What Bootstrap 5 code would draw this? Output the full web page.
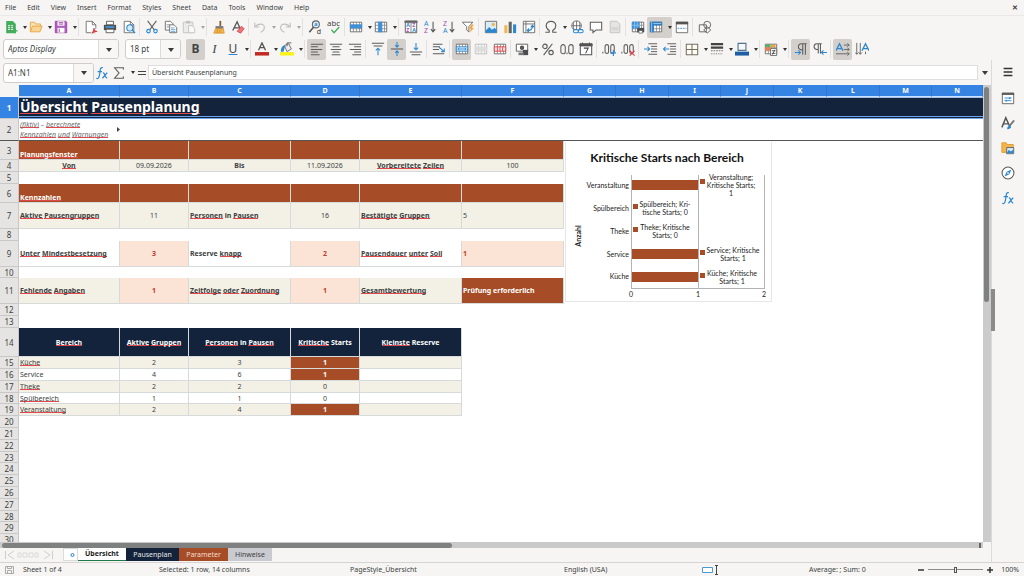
<!DOCTYPE html>
<html lang="en">
<head>
<meta charset="utf-8">
<meta name="viewport" content="width=device-width, initial-scale=1">
<title>Übersicht Pausenplanung</title>
<link href="https://cdn.jsdelivr.net/npm/bootstrap@5.3.0/dist/css/bootstrap.min.css" rel="stylesheet">
<script src="https://cdn.jsdelivr.net/npm/bootstrap@5.3.0/dist/js/bootstrap.bundle.min.js"></script>
<style>
  :root { --ui:#f6f5f4; --edge:#dcdad8; --navy:#14233c; --rust:#a64c26; --cream:#f3f0e6; --peach:#fbe3d6; --blue:#3584e4; --ink:#3c3f41; }
  body { font-family:"Noto Sans","Open Sans",sans-serif; font-size:7px; line-height:10px; color:var(--ink); background:var(--ui); }
  button, input { font:inherit; color:inherit; }
  button { border:0; background:none; padding:0; }

  .menus { height:15px; padding:0 6px 0 0; gap:1px; }
  .menus button { padding:0 5px; }
  .bar-a { height:23px; padding-left:2px; border-top:1px solid #ebe9e7; }
  .bar-b { height:22px; padding-left:3px; }
  .tool { width:19px; height:21px; display:flex; align-items:center; justify-content:center; border-radius:2px; flex:none; }
  .tool svg, .side svg { width:14px; height:14px; display:block; }
  .tool.drop { width:25px; justify-content:flex-start; padding-left:2px; }
  .tool.drop::after { content:""; margin-left:5px; border:2px solid transparent; border-top:3px solid #333; border-bottom:0; }
  .tool.slim { width:16px; }
  .tool.on { background:#d3d0cc; }
  .tool.dim { opacity:.4; }
  .split { width:4px; height:18px; flex:none; background:linear-gradient(90deg,transparent 1px,#e3e1df 1px,#e3e1df 2px,transparent 2px); }
  .bigletter { font-size:12px; line-height:14px; color:#444; width:14px; text-align:center; }
  .serif { font-family:"Liberation Serif",serif; font-size:13px; }
  .uline { text-decoration:underline #2c87cf 1px; text-underline-offset:1px; }

  .combo { height:20px; border:1px solid #cfccc9; border-radius:3px; background:#fff; overflow:hidden; flex:none; }
  .combo input { border:0; padding:0 4px; min-width:0; background:none; outline:0; }
  .combo button { width:20px; background:#f8f7f6; border-left:1px solid var(--edge); flex:none; }
  .caret { display:inline-block; border:3px solid transparent; border-top:4px solid #3a3a3a; border-bottom:0; vertical-align:middle; }
  .font-name { width:116px; margin-right:6px; font-size:8px; font-style:italic; }
  .font-size { width:56px; margin-right:5px; font-size:8px; }
  .name-box { width:91px; font-size:8px; }
  .formula { height:25px; padding-left:3px; }
  .formula .glyph { width:13px; text-align:center; flex:none; }
  .formula .entry { height:15px; border:1px solid #e0dedc; background:#fff; padding:0 3px; min-width:0; outline:0; }

  .side { width:33px; border-left:1px solid var(--edge); padding-top:1px; }
  .side button { height:25px; }
  .side button:first-child { height:22px; margin-bottom:2px; }
  .side .grip { left:-1px; top:229px; width:4px; height:42px; background:#8b8b8b; }

  .sheet { background:#fff; }
  .grid { width:100%; table-layout:fixed; border-collapse:separate; border-spacing:0; }
  .grid th, .grid td { height:12px; padding:0 1px; line-height:9px; overflow:hidden; white-space:nowrap; vertical-align:middle; }
  .grid thead th { background:var(--blue); color:#fff; text-align:center; border-right:1px solid #2f76cc; border-bottom:1px solid #cfe0f7; }
  .grid thead th:first-child { background:var(--ui); border-color:transparent; }
  .grid tbody th { background:#e5e4e3; border-right:1px solid #c9c8c7; border-bottom:1px solid #c9c8c7; font-weight:400; font-size:8px; text-align:center; }
  .grid tbody th.cur { background:var(--blue); color:#fff; font-weight:700; }
  .grid .h11 > * { height:11px; } .grid .h19 > * { height:19px; } .grid .h22 > * { height:22px; }
  .grid .h26 > * { height:26px; } .grid .h29 > * { height:29px; }
  .grid u { text-decoration:none; background:linear-gradient(#e0484c,#e0484c) 0 90%/100% 1px no-repeat; }
  .grid td.heading { background:var(--navy); color:#fff; font-size:14px; line-height:18px; font-weight:700; border-top:1px solid #9dc2f0; border-bottom:3px double #6ea5e8; }
  .grid td.note { font-style:italic; color:#6b6b6b; white-space:normal; padding-right:2px; line-height:10px; }
  .freeze > * { border-bottom:1px solid #555 !important; }
  .cl, .band > td, .navy > td { border-right:1px solid #d6dadb; border-bottom:1px solid #d6dadb; }
  .band > td { background:var(--rust); color:#fff; font-weight:700; }
  .grid .band > td { vertical-align:bottom; }
  .navy > td { background:var(--navy); color:#fff; font-weight:700; text-align:center; }
  .cream { background:var(--cream); }
  .peach { background:var(--peach); color:#b8402a; font-weight:700; }
  .rust { background:var(--rust); color:#fff; font-weight:700; }
  .grid tbody td.plain { background:#fff; border:0; }
  .clipmark { left:117px; top:42px; }
  .chart { left:565px; top:57px; width:207px; height:160px; background:#fff; border:1px solid #e6e6e6; border-top:0; font-family:Lato,sans-serif; }

  .vtrack { width:8px; background:#cbcbcb; padding:2px 1px; }
  .vtrack div { width:5px; height:47.5%; border-radius:3px; background:#7f8180; }
  .htrack { height:6px; background:#c9c9c9; margin-right:8px; padding:1px 2px; }
  .htrack div { height:5px; width:46%; border-radius:3px; background:#7f8180; }
  .htrack i { width:2px; height:5px; background:#666; }

  .tabs { height:14px; }
  .tabs .tab { height:13px; text-align:center; }
  .navs { width:63px; padding-left:4px; }
  .navs button { line-height:0; }
  .tabs .adder { width:15px; background:#fff; border:1px solid var(--edge); text-align:right; line-height:0; padding-right:2px; }
  .t-on { width:48px; background:#fff; border-bottom:1px solid #1f7a4a; color:#222; }
  .t-navy { width:53px; background:var(--navy); color:#e6e6e6; }
  .t-rust { width:49px; background:var(--rust); color:#f6dccf; }
  .t-grey { width:44px; background:#c9cbd0; }

  .status { height:14px; border-top:1px solid #d6d4d2; }
  .s-a { width:136px; } .s-b { width:191px; } .s-c { width:214px; } .s-d { width:138px; } .s-e { width:107px; }
  .zoomset { gap:4px; padding-right:5px; }
  .zoomset button { line-height:0; }
  .zoomset > span { margin-left:4px; }
  .zoomer { width:55px; height:10px; appearance:none; background:linear-gradient(#8c8c8c,#8c8c8c) center/100% 1px no-repeat; }
  .zoomer::-webkit-slider-thumb { appearance:none; width:3px; height:6px; background:#eee; border:1px solid #555; }
</style>
</head>
<body class="vh-100 overflow-hidden d-flex flex-column">

<svg class="d-none" xmlns="http://www.w3.org/2000/svg">
  <defs>
    <g id="page" fill="#fff" stroke="#6b6b6b"><path d="M2.5 1.5h7l4 4v9h-11z"/><path d="M9.5 1.5v4h4" fill="none"/></g>
    <g id="tablegrid"><path d="M1.5 2.500h13v11h-13z" fill="#fff" stroke="#666"/><path d="M1.500 6h13M1.500 10h13M5 2.500v11M8.500 2.500v11M12 2.500v11" fill="none" stroke="#777" stroke-width=".8"/></g>
  </defs>
  <symbol id="new" viewBox="0 0 16 16"><path d="M2.500 1h7.500l3.500 3.500v10.500h-11z" fill="#43b05c"/><path d="M4 5h7v7H4zM4 7.300h7M4 9.600h7M7.500 5v7" fill="#d9f2df" stroke="#2c9648" stroke-width=".8"/><path d="M13 10v5M10.500 12.500h5" stroke="#43b05c" stroke-width="1.500"/></symbol>
  <symbol id="open" viewBox="0 0 16 16"><path d="M1.500 13.500v-11h5l1 2h5.500v3" fill="#fbe3b8" stroke="#e8a33d"/><path d="M1.500 13.500l2.500-6.500h11l-2.500 6.500z" fill="#f8d594" stroke="#e8a33d"/></symbol>
  <symbol id="save" viewBox="0 0 16 16"><path d="M1.500 1.500h12l1 1v12h-13z" fill="#b05cc0" stroke="#96429f"/><path d="M4 1.500h8v5H4z" fill="#fff"/><path d="M4 9h8v5.500H4z" fill="#fff"/><path d="M5.500 3h5M5.500 4.700h5M6 10v4" stroke="#96429f"/></symbol>
  <symbol id="pdf" viewBox="0 0 16 16"><use href="#page"/><path d="M8 10h7v5H8z" fill="#fff"/><path d="M9 15c2-2 2.500-4 2.500-6 0 3 1.500 4 3.500 4-3 0-5 1-6 2z" fill="none" stroke="#d9363e" stroke-width="1.200"/></symbol>
  <symbol id="print" viewBox="0 0 16 16"><path d="M4 1.500h8v4H4z" fill="#fff" stroke="#555"/><path d="M1 5.500h14v6H1z" fill="#4d5053"/><path d="M3 7h10v2H3z" fill="#4a96d8"/><path d="M3.500 10.500h9v4h-9z" fill="#fff" stroke="#555"/></symbol>
  <symbol id="preview" viewBox="0 0 16 16"><use href="#page"/><circle cx="9" cy="9" r="3.500" fill="#d7ebfb" stroke="#2c87cf" stroke-width="1.200"/><path d="M11.500 11.500l3.500 3.500" stroke="#2c87cf" stroke-width="1.500"/></symbol>
  <symbol id="cut" viewBox="0 0 16 16"><path d="M3 1l7.500 10M13 1L5.500 11" stroke="#666" stroke-width="1.300"/><circle cx="4" cy="12.700" r="2" fill="none" stroke="#2c87cf" stroke-width="1.300"/><circle cx="12" cy="12.700" r="2" fill="none" stroke="#2c87cf" stroke-width="1.300"/></symbol>
  <symbol id="copy" viewBox="0 0 16 16"><path d="M1.500 1.500h6l3 3v7h-9z" fill="#fff" stroke="#666"/><path d="M3 5.500h4M3 8h3" stroke="#888"/><path d="M6.500 5.500h5l3 3v6h-8z" fill="#fff" stroke="#666"/><path d="M8 9h4M8 11h5M8 13h5" stroke="#2c87cf" stroke-width=".8"/></symbol>
  <symbol id="paste" viewBox="0 0 16 16"><path d="M1.500 2.500h11v12h-11z" fill="#ddd" stroke="#777"/><path d="M4.500 1h5v3h-5z" fill="#777"/><path d="M7.500 6.500h4l3 3v5h-7z" fill="#fff" stroke="#777"/></symbol>
  <symbol id="clone" viewBox="0 0 16 16"><path d="M9.500 1v6" stroke="#8a5b2b" stroke-width="2"/><path d="M4 7h9v3H4z" fill="#777"/><path d="M4 10h9l1 5H2z" fill="#f2b54f" stroke="#d28d22" stroke-width=".8"/><path d="M6 11v4M9 11v4" stroke="#d28d22"/></symbol>
  <symbol id="clear" viewBox="0 0 16 16"><path d="M2 12L7 2l3.500 8M4 9h5" fill="none" stroke="#555" stroke-width="1.500"/><path d="M7 13l5-6 3 3-4 5z" fill="#ee7376" stroke="#cf3a40" stroke-width=".8"/></symbol>
  <symbol id="undo" viewBox="0 0 16 16"><path d="M2 3v5h5M2.500 8C5 4 13 3 13 8.500c0 3-2 4.500-4.500 5.500" fill="none" stroke="#777" stroke-width="1.300"/></symbol>
  <symbol id="redo" viewBox="0 0 16 16"><path d="M14 3v5H9M13.500 8C11 4 3 3 3 8.500c0 3 2 4.500 4.500 5.500" fill="none" stroke="#777" stroke-width="1.300"/></symbol>
  <symbol id="find" viewBox="0 0 16 16"><circle cx="9" cy="5" r="4" fill="#d8ecfb" stroke="#666" stroke-width="1.200"/><path d="M6.500 8L1.500 14" stroke="#555" stroke-width="1.800"/><text x="7" y="7" font-size="6" fill="#2c87cf" font-weight="700">a</text><text x="10" y="16" font-size="8" fill="#333">d</text></symbol>
  <symbol id="spell" viewBox="0 0 16 16"><text x="0" y="7" font-size="9" fill="#444">abc</text><path d="M5 11l3 3.500 6-6.500" fill="none" stroke="#43a85b" stroke-width="1.500"/></symbol>
  <symbol id="rows" viewBox="0 0 16 16"><use href="#tablegrid"/><path d="M1 5h14v4.500H1z" fill="#3c91d8"/></symbol>
  <symbol id="cols" viewBox="0 0 16 16"><use href="#tablegrid"/><path d="M5 2h4.500v12H5z" fill="#3c91d8"/></symbol>
  <symbol id="sort" viewBox="0 0 16 16"><path d="M1.500 1.500h13v13h-13z" fill="#fff" stroke="#555"/><path d="M1 1h14v2H1zM8 3v12" fill="#555" stroke="#777"/><g font-size="6" font-weight="700"><text x="2.500" y="8.500" fill="#2c87cf">A</text><text x="2.500" y="14" fill="#a04fb5">Z</text><text x="9.500" y="8.500" fill="#a04fb5">Z</text><text x="9.500" y="14" fill="#2c87cf">A</text></g></symbol>
  <symbol id="az" viewBox="0 0 16 16"><g font-size="8"><text x="1" y="7" fill="#2c87cf">A</text><text x="1" y="15" fill="#a04fb5">Z</text></g><path d="M11.500 2v11M9 10.500l2.500 3 2.500-3" fill="none" stroke="#555" stroke-width="1.200"/></symbol>
  <symbol id="za" viewBox="0 0 16 16"><g font-size="8"><text x="1" y="7" fill="#a04fb5">Z</text><text x="1" y="15" fill="#2c87cf">A</text></g><path d="M11.500 2v11M9 10.500l2.500 3 2.500-3" fill="none" stroke="#555" stroke-width="1.200"/></symbol>
  <symbol id="filter" viewBox="0 0 16 16"><path d="M1.500 2.500h12l-4.500 5v6l-2.500-2v-4z" fill="#fff" stroke="#666"/><path d="M12 5l-3 5h2.500L9 15l6-6h-2.500l2-4z" fill="#f2a73c"/></symbol>
  <symbol id="image" viewBox="0 0 16 16"><path d="M1.500 1.500h13v13h-13z" fill="#d8ecfb" stroke="#666"/><circle cx="10.500" cy="5" r="1.800" fill="#f5b63f"/><path d="M2 12l4-4 3 3 3-2 2.500 2v3.500H2z" fill="#2c87cf"/></symbol>
  <symbol id="bars" viewBox="0 0 16 16"><path d="M1.500 6h3.500v9H1.500z" fill="#f2b54f"/><path d="M6.500 2H10v13H6.500z" fill="#636363"/><path d="M11.500 5H15v10h-3.500z" fill="#2c87cf"/></symbol>
  <symbol id="pivot" viewBox="0 0 16 16"><path d="M1.500 1.500h13v13h-13zM1.500 4.500h13M4.500 1.500v13" fill="#fff" stroke="#666"/><path d="M6 12c5 0 6-2 6-5M10 8.500l2-2.500 2 2.500M8 9.500L6 12l2 2" fill="none" stroke="#2c87cf" stroke-width="1.300"/></symbol>
  <symbol id="omega" viewBox="0 0 16 16"><path d="M1.500 14H6v-2C3 10 2.500 8 2.500 6.500 2.500 3.500 5 1.500 8 1.500s5.500 2 5.500 5c0 1.500-.500 3.500-3.500 5.500v2h4.500" fill="none" stroke="#5c5c5c" stroke-width="1.300"/></symbol>
  <symbol id="link" viewBox="0 0 16 16"><circle cx="7.500" cy="6.500" r="5.500" fill="#fff" stroke="#666"/><path d="M2 6.500h11M7.500 1v11M4.500 2c-1 3-1 6 0 9M10.500 2c1 3 1 6 0 9" fill="none" stroke="#666"/><rect x="4" y="11" width="5.500" height="3.500" rx="1.700" fill="#fff" stroke="#2c87cf" stroke-width="1.200"/><rect x="9.500" y="11" width="5.500" height="3.500" rx="1.700" fill="#fff" stroke="#2c87cf" stroke-width="1.200"/></symbol>
  <symbol id="comment" viewBox="0 0 16 16"><path d="M1.500 2.500h13v9H8l-3.500 3v-3h-3z" fill="#fff" stroke="#5c5c5c" stroke-width="1.200"/></symbol>
  <symbol id="header" viewBox="0 0 16 16"><path d="M2.500 1.500h8l3 3v10h-11z" fill="#ccc" stroke="#777"/><path d="M4 8h8v4H4z" fill="#aaa"/></symbol>
  <symbol id="range" viewBox="0 0 16 16"><use href="#tablegrid"/><path d="M1 2h9v8H1z" fill="#3c91d8"/><path d="M4 2v8M7 2v8M1 6h9" stroke="#9fcbef" stroke-width=".8"/><path d="M7 9h8v5H7z" fill="#4d5053"/><path d="M9 12h4v3H9z" fill="#fff" stroke="#555" stroke-width=".8"/></symbol>
  <symbol id="freeze" viewBox="0 0 16 16"><use href="#tablegrid"/><path d="M1 2h14v4H1zM1 6h4.500v8H1z" fill="#2c7fc6"/><path d="M3 2v12M5 4h9" stroke="#9fcbef"/></symbol>
  <symbol id="window" viewBox="0 0 16 16"><path d="M1.500 2.500h13v12h-13z" fill="#fff" stroke="#666"/><path d="M1 2h14v3H1z" fill="#555"/><path d="M3 9.500h10" stroke="#2c87cf" stroke-dasharray="2 1"/></symbol>
  <symbol id="shapes" viewBox="0 0 16 16"><g fill="none" stroke="#666" stroke-width="1.100"><path d="M1.500 5.500h8v8h-8z"/><circle cx="10.500" cy="5.500" r="4"/><path d="M10.500 7.500l4 4-4 3.500-4-3.500z"/></g></symbol>
  <symbol id="fcolor" viewBox="0 0 16 16"><path d="M4 9.500L8 1l4 8.500M5.500 6.500h5" fill="none" stroke="#555" stroke-width="1.500"/><path d="M0 11.500h16v4H0z" fill="#c3271f"/></symbol>
  <symbol id="bcolor" viewBox="0 0 16 16"><path d="M5 4l5-2 3 6-5 3z" fill="#eee" stroke="#666"/><path d="M8 5V1h5" fill="none" stroke="#555"/><path d="M1 11c0-5 2-7 5-7L4 11z" fill="#2c87cf"/><path d="M0 11.500h16v4H0z" fill="#fbf21c"/></symbol>
  <symbol id="left" viewBox="0 0 16 16"><path d="M1 2.500h14M1 5.500h8M1 8.500h13M1 11.500h8M1 14.500h10" stroke="#5c5c5c" stroke-width="1.200"/></symbol>
  <symbol id="center" viewBox="0 0 16 16"><path d="M1 2.500h14M4 5.500h8M2 8.500h12M4 11.500h8M3 14.500h10" stroke="#5c5c5c" stroke-width="1.200"/></symbol>
  <symbol id="right" viewBox="0 0 16 16"><path d="M1 2.500h14M7 5.500h8M2 8.500h13M7 11.500h8M5 14.500h10" stroke="#5c5c5c" stroke-width="1.200"/></symbol>
  <symbol id="vtop" viewBox="0 0 16 16"><path d="M1 1.500h14M3 4.500h10" stroke="#5c5c5c" stroke-width="1.200"/><path d="M8 15V7M5.500 9.500L8 7l2.500 2.500" fill="none" stroke="#2c87cf" stroke-width="1.200"/></symbol>
  <symbol id="vmid" viewBox="0 0 16 16"><path d="M1 8h14" stroke="#5c5c5c" stroke-width="1.200"/><path d="M8 0v6M6 3.500L8 6l2-2.500M8 16v-6M6 12.500l2-2.500 2 2.500" fill="none" stroke="#2c87cf" stroke-width="1.200"/></symbol>
  <symbol id="vbot" viewBox="0 0 16 16"><path d="M1 11.500h14M3 14.500h10" stroke="#5c5c5c" stroke-width="1.200"/><path d="M8 1v8M5.500 6.500L8 9l2.500-2.500" fill="none" stroke="#2c87cf" stroke-width="1.200"/></symbol>
  <symbol id="wrap" viewBox="0 0 16 16"><path d="M1 2.500h11M1 5.500h8M1 8.500h7M1 13.500h13" stroke="#5c5c5c" stroke-width="1.200"/><path d="M8 6l6 5M14 7.500V11h-3.500" fill="none" stroke="#2c87cf" stroke-width="1.200"/></symbol>
  <symbol id="merge" viewBox="0 0 16 16"><use href="#tablegrid"/><path d="M1.500 5.500h13v5h-13z" fill="#d8ecfb" stroke="#2c87cf"/><path d="M3 8h10M5 6.500L3.500 8 5 9.500M11 6.500L12.500 8 11 9.500" fill="none" stroke="#2c87cf"/></symbol>
  <symbol id="mergeb" viewBox="0 0 16 16"><use href="#tablegrid"/><path d="M1 5.500h14v5H1z" fill="#bbb"/></symbol>
  <symbol id="unmerge" viewBox="0 0 16 16"><use href="#tablegrid"/><path d="M1.500 5.500h13v5h-13zM8 5.500v5M5 5.500v5M11 5.500v5" fill="#fde6e6" stroke="#d9454a"/></symbol>
  <symbol id="money" viewBox="0 0 16 16"><path d="M1.500 2.500h13v8h-13z" fill="#fff" stroke="#555"/><circle cx="8" cy="6.500" r="2.500" fill="#555"/><path d="M9 9h6v6H9z" fill="#4d4d4d"/><path d="M4 12h6v3H4z" fill="#777"/></symbol>
  <symbol id="percent" viewBox="0 0 16 16"><g fill="none" stroke="#5c5c5c" stroke-width="1.300"><circle cx="4.500" cy="5" r="2.500"/><circle cx="11.500" cy="12" r="2.500"/><path d="M13 2L3 15"/></g></symbol>
  <symbol id="number" viewBox="0 0 16 16"><g fill="none" stroke="#5c5c5c" stroke-width="1.200"><rect x="1" y="3" width="5" height="10.500" rx="2.500"/><rect x="10" y="3" width="5" height="10.500" rx="2.500"/><path d="M8 12v2"/></g></symbol>
  <symbol id="date" viewBox="0 0 16 16"><path d="M1.500 2.500h13v12h-13z" fill="#fff" stroke="#555" stroke-width="1.200"/><path d="M1 2h14v2.500H1zM4 .5v2M12 .5v2" fill="#555" stroke="#555"/><path d="M5.500 7h5l-3 6" fill="none" stroke="#444" stroke-width="1.200"/></symbol>
  <symbol id="decadd" viewBox="0 0 16 16"><g fill="none" stroke="#5c5c5c" stroke-width="1.200"><path d="M1 11v2"/><rect x="3.500" y="3" width="4" height="10" rx="2"/><rect x="10" y="3" width="4" height="10" rx="2"/></g><path d="M13 9v7M9.500 12.500H16" stroke="#2c87cf" stroke-width="1.300"/></symbol>
  <symbol id="decdel" viewBox="0 0 16 16"><g fill="none" stroke="#5c5c5c" stroke-width="1.200"><path d="M1 11v2"/><rect x="3.500" y="3" width="4" height="10" rx="2"/><rect x="10" y="3" width="4" height="10" rx="2"/></g><path d="M10 10l5.500 5.500M15.500 10L10 15.500" stroke="#d9454a" stroke-width="1.300"/></symbol>
  <symbol id="indent" viewBox="0 0 16 16"><path d="M5 2h10M8 5h7M8 8h7M8 11h7M5 14h10" stroke="#5c5c5c" stroke-width="1.100"/><path d="M0 8h6M4 5.500L6.500 8 4 10.500" fill="none" stroke="#2c87cf" stroke-width="1.200"/></symbol>
  <symbol id="outdent" viewBox="0 0 16 16"><path d="M5 2h10M8 5h7M8 8h7M8 11h7M5 14h10" stroke="#5c5c5c" stroke-width="1.100"/><path d="M7 8H1M3 5.500L.5 8 3 10.500" fill="none" stroke="#2c87cf" stroke-width="1.200"/></symbol>
  <symbol id="borders" viewBox="0 0 16 16"><path d="M1.500 2.500h13v12h-13zM8 2.500v12M1.500 8.500h13" fill="#fffdf5" stroke="#76705f" stroke-width="1.200"/></symbol>
  <symbol id="bstyle" viewBox="0 0 16 16"><path d="M1 2.500h14M1 6.500h14" stroke="#444" stroke-width="2.500"/><path d="M1 10h14" stroke="#666" stroke-dasharray="2 1"/><path d="M1 13.500h14" stroke="#666" stroke-dasharray="1 1"/></symbol>
  <symbol id="bcol" viewBox="0 0 16 16"><path d="M3.500 1.500h9v8h-9z" fill="#f4f9fd" stroke="#56728c" stroke-width="1.300"/><path d="M0 11h16v4.500H0z" fill="#1d5fa6"/></symbol>
  <symbol id="cond" viewBox="0 0 16 16"><use href="#tablegrid"/><path d="M1.500 3h6v3h-6z" fill="#54b36a"/><path d="M1.500 6h6v4h-6z" fill="#ea7f52"/><path d="M8 3h5v3H8z" fill="#e8a33d"/><path d="M7.500 7.500h7v8h-7z" fill="#fff" stroke="#666"/><path d="M9 10h4M9 13h4M12.500 9l-3 5.500" stroke="#444"/></symbol>
  <symbol id="ltr" viewBox="0 0 16 16"><path d="M14.500 2H8.500a3.500 3.500 0 000 7H10V2M10 2v12.500M13 2v12.500" fill="none" stroke="#5c5c5c" stroke-width="1.200"/><path d="M1 12h6M5 9.500L7.500 12 5 14.500" fill="none" stroke="#2c87cf" stroke-width="1.200"/></symbol>
  <symbol id="rtl" viewBox="0 0 16 16"><path d="M10 2H4.500a3 3 0 000 6.500H6V2v11M8.500 2v11" fill="none" stroke="#5c5c5c" stroke-width="1.200"/><path d="M16 12h-6M12 9.500L9.500 12l2.500 2.500" fill="none" stroke="#2c87cf" stroke-width="1.200"/></symbol>
  <symbol id="hori" viewBox="0 0 16 16"><path d="M0 10L4 2l4 8M1.500 7.500h5" fill="none" stroke="#2c87cf" stroke-width="1.500"/><path d="M9 3.500h6M9 8.500h6M0 13.500h15M13 1.500l2 2-2 2M13 6.500l2 2-2 2M13 11.500l2 2-2 2" fill="none" stroke="#5c5c5c"/></symbol>
  <symbol id="vert" viewBox="0 0 16 16"><path d="M8 10l4-8 4 8M9.500 7.500h5" fill="none" stroke="#2c87cf" stroke-width="1.500"/><path d="M2 1v13M6 1v13M0 12l2 2 2-2M4.500 12L6 14l2-2M12 11v3" fill="none" stroke="#5c5c5c"/></symbol>
  <symbol id="deck" viewBox="0 0 16 16"><path d="M1.500 2.500h13v12h-13z" fill="#fff" stroke="#5c5c5c"/><path d="M1 2h14v2.500H1z" fill="#5c5c5c"/><path d="M4 8h8M4 11h8" stroke="#2c87cf"/><path d="M10 7v2M6 10v2" stroke="#2c87cf" stroke-width="1.500"/></symbol>
  <symbol id="styles" viewBox="0 0 16 16"><path d="M1 13L5.500 2 10 12M2.500 9h6" fill="none" stroke="#555" stroke-width="1.700"/><path d="M15 5l-5 6" stroke="#777" stroke-width="2"/><path d="M7 15c0-3 2-4.500 4-4 1.500 2-1 4-4 4z" fill="#2c87cf"/></symbol>
  <symbol id="gallery" viewBox="0 0 16 16"><path d="M1 2h5l1 2h7v9H1z" fill="#f2b54f" stroke="#dd9930"/><path d="M6.500 7.500h8v7h-8z" fill="#d8ecfb" stroke="#5c5c5c"/><path d="M7 13l2-3 2 2 3-2v4H7z" fill="#2c87cf"/></symbol>
  <symbol id="nav" viewBox="0 0 16 16"><circle cx="8" cy="8" r="6.800" fill="#fff" stroke="#5c5c5c" stroke-width="1.200"/><path d="M12 4L9.500 9.500 4 12l2.500-5.500z" fill="#2c87cf"/><circle cx="8" cy="8" r="1" fill="#fff"/></symbol>
  <symbol id="fx" viewBox="0 0 16 16"><g fill="none" stroke="#2c87cf" stroke-width="1.400"><path d="M9 2C6 1 6 4 5.500 8S4 15.500 1.500 14M3 6.500h5"/><path d="M9 8c2.500-1 2 6 5 5.500M14 7.500L8.500 14"/></g></symbol>
  <symbol id="sigma" viewBox="0 0 16 16"><path d="M13 4V2H3l5 6-5 6h10v-2" fill="none" stroke="#5c5c5c" stroke-width="1.300"/></symbol>
  <symbol id="burger" viewBox="0 0 16 16"><path d="M3 4h10M3 8h10M3 12h10" stroke="#333" stroke-width="1.600"/></symbol>
</svg>

<nav class="menus d-flex align-items-center flex-shrink-0" aria-label="Menu">
  <button>File</button><button>Edit</button><button>View</button><button>Insert</button><button>Format</button><button>Styles</button><button>Sheet</button><button>Data</button><button>Tools</button><button>Window</button><button>Help</button>
  <button class="ms-auto p-0 fw-bold" aria-label="Close document">✕</button>
</nav>

<div class="bar-a d-flex align-items-center flex-shrink-0" role="toolbar" aria-label="Standard">
  <button class="tool drop" aria-label="New"><svg><use href="#new"/></svg></button><button class="tool drop" aria-label="Open"><svg><use href="#open"/></svg></button><button class="tool drop" aria-label="Save"><svg><use href="#save"/></svg></button><span class="split"></span>
  <button class="tool" aria-label="Export PDF"><svg><use href="#pdf"/></svg></button><button class="tool" aria-label="Print"><svg><use href="#print"/></svg></button><button class="tool" aria-label="Preview"><svg><use href="#preview"/></svg></button><span class="split"></span>
  <button class="tool" aria-label="Cut"><svg><use href="#cut"/></svg></button><button class="tool" aria-label="Copy"><svg><use href="#copy"/></svg></button><button class="tool drop dim" aria-label="Paste"><svg><use href="#paste"/></svg></button><span class="split"></span>
  <button class="tool" aria-label="Clone formatting"><svg><use href="#clone"/></svg></button><button class="tool" aria-label="Clear formatting"><svg><use href="#clear"/></svg></button><span class="split"></span>
  <button class="tool drop dim" aria-label="Undo"><svg><use href="#undo"/></svg></button><button class="tool drop dim" aria-label="Redo"><svg><use href="#redo"/></svg></button><span class="split"></span>
  <button class="tool" aria-label="Find"><svg><use href="#find"/></svg></button><button class="tool" aria-label="Spelling"><svg><use href="#spell"/></svg></button><span class="split"></span>
  <button class="tool drop" aria-label="Row"><svg><use href="#rows"/></svg></button><button class="tool drop" aria-label="Column"><svg><use href="#cols"/></svg></button><span class="split"></span>
  <button class="tool" aria-label="Sort"><svg><use href="#sort"/></svg></button><button class="tool" aria-label="Sort ascending"><svg><use href="#az"/></svg></button><button class="tool" aria-label="Sort descending"><svg><use href="#za"/></svg></button><button class="tool" aria-label="AutoFilter"><svg><use href="#filter"/></svg></button><span class="split"></span>
  <button class="tool" aria-label="Image"><svg><use href="#image"/></svg></button><button class="tool" aria-label="Chart"><svg><use href="#bars"/></svg></button><button class="tool" aria-label="Pivot table"><svg><use href="#pivot"/></svg></button><span class="split"></span>
  <button class="tool drop" aria-label="Special character"><svg><use href="#omega"/></svg></button><button class="tool" aria-label="Hyperlink"><svg><use href="#link"/></svg></button><button class="tool" aria-label="Comment"><svg><use href="#comment"/></svg></button><button class="tool dim" aria-label="Headers and footers"><svg><use href="#header"/></svg></button><span class="split"></span>
  <button class="tool" aria-label="Print area"><svg><use href="#range"/></svg></button><button class="tool drop on" aria-label="Freeze"><svg><use href="#freeze"/></svg></button><button class="tool" aria-label="Split window"><svg><use href="#window"/></svg></button><span class="split"></span>
  <button class="tool" aria-label="Draw functions"><svg><use href="#shapes"/></svg></button>
</div>

<div class="bar-b d-flex align-items-center flex-shrink-0" role="toolbar" aria-label="Formatting">
  <div class="combo font-name d-flex"><input class="flex-grow-1" aria-label="Font name" value="Aptos Display"><button aria-label="Fonts"><span class="caret"></span></button></div>
  <div class="combo font-size d-flex"><input class="flex-grow-1" aria-label="Font size" value="18 pt"><button aria-label="Sizes"><span class="caret"></span></button></div>
  <button class="tool on fw-bold" aria-label="Bold"><span class="bigletter">B</span></button><button class="tool" aria-label="Italic"><i class="bigletter serif">I</i></button><button class="tool drop" aria-label="Underline"><span class="bigletter uline">U</span></button><span class="split"></span>
  <button class="tool drop" aria-label="Font colour"><svg><use href="#fcolor"/></svg></button><button class="tool drop" aria-label="Highlighting"><svg><use href="#bcolor"/></svg></button><span class="split"></span>
  <button class="tool on" aria-label="Align left"><svg><use href="#left"/></svg></button><button class="tool" aria-label="Align centre"><svg><use href="#center"/></svg></button><button class="tool" aria-label="Align right"><svg><use href="#right"/></svg></button><span class="split"></span>
  <button class="tool" aria-label="Align top"><svg><use href="#vtop"/></svg></button><button class="tool on" aria-label="Centre vertically"><svg><use href="#vmid"/></svg></button><button class="tool" aria-label="Align bottom"><svg><use href="#vbot"/></svg></button><span class="split"></span>
  <button class="tool" aria-label="Wrap text"><svg><use href="#wrap"/></svg></button><span class="split"></span>
  <button class="tool on" aria-label="Merge and centre"><svg><use href="#merge"/></svg></button><button class="tool dim" aria-label="Merge cells"><svg><use href="#mergeb"/></svg></button><button class="tool" aria-label="Unmerge cells"><svg><use href="#unmerge"/></svg></button><span class="split"></span>
  <button class="tool drop" aria-label="Currency"><svg><use href="#money"/></svg></button><button class="tool" aria-label="Percent"><svg><use href="#percent"/></svg></button><button class="tool" aria-label="Number"><svg><use href="#number"/></svg></button><button class="tool" aria-label="Date"><svg><use href="#date"/></svg></button><span class="split"></span>
  <button class="tool" aria-label="Add decimal place"><svg><use href="#decadd"/></svg></button><button class="tool" aria-label="Delete decimal place"><svg><use href="#decdel"/></svg></button><span class="split"></span>
  <button class="tool" aria-label="Increase indent"><svg><use href="#indent"/></svg></button><button class="tool" aria-label="Decrease indent"><svg><use href="#outdent"/></svg></button><span class="split"></span>
  <button class="tool drop" aria-label="Borders"><svg><use href="#borders"/></svg></button><button class="tool drop" aria-label="Border style"><svg><use href="#bstyle"/></svg></button><button class="tool drop" aria-label="Border colour"><svg><use href="#bcol"/></svg></button><span class="split"></span>
  <button class="tool drop" aria-label="Conditional"><svg><use href="#cond"/></svg></button><span class="split"></span>
  <button class="tool on" aria-label="Left to right"><svg><use href="#ltr"/></svg></button><button class="tool" aria-label="Right to left"><svg><use href="#rtl"/></svg></button><span class="split"></span>
  <button class="tool on" aria-label="Text direction horizontal"><svg><use href="#hori"/></svg></button><button class="tool" aria-label="Text direction vertical"><svg><use href="#vert"/></svg></button>
</div>

<div class="d-flex flex-grow-1 overflow-hidden">
  <main class="d-flex flex-column flex-grow-1 overflow-hidden">
    <div class="formula d-flex align-items-center flex-shrink-0">
      <div class="combo name-box d-flex"><input class="flex-grow-1" aria-label="Name box" value="A1:N1"><button aria-label="Names"><span class="caret"></span></button></div>
      <button class="tool slim" aria-label="Function wizard"><svg><use href="#fx"/></svg></button>
      <button class="tool drop" aria-label="Sum"><svg><use href="#sigma"/></svg></button>
      <button class="glyph" aria-label="Formula"><svg width="10" height="8"><path d="M1 2.500h8M1 5.500h8" stroke="#444"/></svg></button>
      <input class="entry flex-grow-1" aria-label="Formula input" value="Übersicht Pausenplanung">
      <button class="glyph" aria-label="Expand formula bar"><span class="caret"></span></button>
    </div>

    <div class="d-flex flex-grow-1 overflow-hidden">
      <div class="sheet flex-grow-1 overflow-hidden position-relative">
        <table class="grid">
          <colgroup><col width="19"><col width="101"><col width="69"><col width="102"><col width="69"><col width="102"><col width="102"><col width="52"><col width="53"><col width="52"><col width="53"><col width="53"><col width="53"><col width="52"><col></colgroup>
          <thead><tr><th></th><th>A</th><th>B</th><th>C</th><th>D</th><th>E</th><th>F</th><th>G</th><th>H</th><th>I</th><th>J</th><th>K</th><th>L</th><th>M</th><th>N</th></tr></thead>
          <tbody>
            <tr class="h22"><th class="cur">1</th><td class="heading" colspan="14"><u>Übersicht</u> <u>Pausenplanung</u></td></tr>
            <tr class="h22 freeze"><th>2</th><td class="note"><u>(fiktiv)</u> – <u>berechnete</u><br><u>Kennzahlen</u> <u>und</u> <u>Warnungen</u></td><td colspan="13"></td></tr>
            <tr class="h19 band"><th>3</th><td><u>Planungsfenster</u></td><td></td><td></td><td></td><td></td><td></td><td class="plain" colspan="8"></td></tr>
            <tr class="text-center"><th>4</th><td class="cl cream fw-bold"><u>Von</u></td><td class="cl cream">09.09.2026</td><td class="cl cream fw-bold">Bis</td><td class="cl cream">11.09.2026</td><td class="cl cream fw-bold"><u>Vorbereitete</u> <u>Zeilen</u></td><td class="cl cream">100</td><td colspan="8"></td></tr>
            <tr><th>5</th><td colspan="14"></td></tr>
            <tr class="h19 band"><th>6</th><td><u>Kennzahlen</u></td><td></td><td></td><td></td><td></td><td></td><td class="plain" colspan="8"></td></tr>
            <tr class="h26"><th>7</th><td class="cl cream fw-bold"><u>Aktive</u> <u>Pausengruppen</u></td><td class="cl cream text-center">11</td><td class="cl cream fw-bold"><u>Personen</u> in <u>Pausen</u></td><td class="cl cream text-center">16</td><td class="cl cream fw-bold"><u>Bestätigte</u> <u>Gruppen</u></td><td class="cl cream">5</td><td colspan="8"></td></tr>
            <tr><th>8</th><td colspan="14"></td></tr>
            <tr class="h26"><th>9</th><td class="cl fw-bold"><u>Unter</u> <u>Mindestbesetzung</u></td><td class="cl peach text-center">3</td><td class="cl fw-bold">Reserve <u>knapp</u></td><td class="cl peach text-center">2</td><td class="cl fw-bold"><u>Pausendauer</u> <u>unter</u> <u>Soll</u></td><td class="cl peach">1</td><td colspan="8"></td></tr>
            <tr class="h11"><th>10</th><td colspan="14"></td></tr>
            <tr class="h26"><th>11</th><td class="cl cream fw-bold"><u>Fehlende</u> <u>Angaben</u></td><td class="cl peach text-center">1</td><td class="cl cream fw-bold"><u>Zeitfolge</u> <u>oder</u> <u>Zuordnung</u></td><td class="cl peach text-center">1</td><td class="cl cream fw-bold"><u>Gesamtbewertung</u></td><td class="cl rust">Prüfung erforderlich</td><td colspan="8"></td></tr>
            <tr><th>12</th><td colspan="14"></td></tr>
            <tr><th>13</th><td colspan="14"></td></tr>
            <tr class="h29 navy"><th>14</th><td><u>Bereich</u></td><td><u>Aktive</u> <u>Gruppen</u></td><td><u>Personen</u> in <u>Pausen</u></td><td><u>Kritische</u> Starts</td><td><u>Kleinste</u> Reserve</td><td class="plain" colspan="9"></td></tr>
            <tr><th>15</th><td class="cl cream"><u>Küche</u></td><td class="cl cream text-center">2</td><td class="cl cream text-center">3</td><td class="cl rust text-center">1</td><td class="cl cream"></td><td colspan="9"></td></tr>
            <tr><th>16</th><td class="cl">Service</td><td class="cl text-center">4</td><td class="cl text-center">6</td><td class="cl rust text-center">1</td><td class="cl"></td><td colspan="9"></td></tr>
            <tr><th>17</th><td class="cl cream"><u>Theke</u></td><td class="cl cream text-center">2</td><td class="cl cream text-center">2</td><td class="cl cream text-center">0</td><td class="cl cream"></td><td colspan="9"></td></tr>
            <tr class="h11"><th>18</th><td class="cl"><u>Spülbereich</u></td><td class="cl text-center">1</td><td class="cl text-center">1</td><td class="cl text-center">0</td><td class="cl"></td><td colspan="9"></td></tr>
            <tr><th>19</th><td class="cl cream"><u>Veranstaltung</u></td><td class="cl cream text-center">2</td><td class="cl cream text-center">4</td><td class="cl rust text-center">1</td><td class="cl cream"></td><td colspan="9"></td></tr>
            <tr><th>20</th><td colspan="14"></td></tr><tr><th>21</th><td colspan="14"></td></tr>
            <tr><th>22</th><td colspan="14"></td></tr><tr class="h11"><th>23</th><td colspan="14"></td></tr>
            <tr><th>24</th><td colspan="14"></td></tr><tr><th>25</th><td colspan="14"></td></tr>
            <tr><th>26</th><td colspan="14"></td></tr><tr><th>27</th><td colspan="14"></td></tr>
            <tr class="h11"><th>28</th><td colspan="14"></td></tr><tr><th>29</th><td colspan="14"></td></tr><tr><th>30</th><td colspan="14"></td></tr>
          </tbody>
        </table>
        <svg class="clipmark position-absolute" width="3" height="5" aria-hidden="true"><path d="M0 0l3 2.500-3 2.500z" fill="#444"/></svg>
        <figure class="chart position-absolute m-0">
          <svg width="205" height="159" viewBox="0 0 205 159" role="img" aria-label="Kritische Starts nach Bereich">
            <path d="M65.500 33v114M132.500 33v114M198.500 33v114M65 146.500h134" stroke="#b3b3b3" fill="none"/>
            <g fill="#a64c26"><path d="M66 38h66v10H66zM66 107h66v10H66zM66 130h66v10H66z"/><path d="M134 37h5v5h-5zM67 62h5v5h-5zM67 85h5v5h-5zM134 108h5v5h-5zM134 131h5v5h-5z"/></g>
            <text x="101" y="20" font-size="12" font-weight="700" text-anchor="middle" fill="#111">Kritische Starts nach Bereich</text>
            <g font-size="7" fill="#222">
              <g text-anchor="end"><text x="63" y="46">Veranstaltung</text><text x="63" y="69">Spülbereich</text><text x="63" y="92">Theke</text><text x="63" y="115">Service</text><text x="63" y="137">Küche</text></g>
              <g text-anchor="middle">
                <text x="165" y="38">Veranstaltung;</text><text x="165" y="46">Kritische Starts;</text><text x="165" y="54">1</text>
                <text x="99" y="65">Spülbereich; Kri-</text><text x="99" y="73">tische Starts; 0</text>
                <text x="99" y="88">Theke; Kritische</text><text x="99" y="96">Starts; 0</text>
                <text x="167" y="111">Service; Kritische</text><text x="167" y="119">Starts; 1</text>
                <text x="166" y="134">Küche; Kritische</text><text x="166" y="142">Starts; 1</text>
                <text x="65" y="155">0</text><text x="132" y="155">1</text><text x="198" y="155">2</text>
              </g>
              <text transform="translate(15 94) rotate(-90)" text-anchor="middle" font-weight="700">Anzahl</text>
            </g>
          </svg>
        </figure>
      </div>
      <div class="vtrack flex-shrink-0"><div></div></div>
    </div>
    <div class="htrack d-flex justify-content-between flex-shrink-0"><div></div><i></i></div>
    <div class="tabs d-flex flex-shrink-0">
      <div class="navs d-flex align-items-center">
        <button aria-label="First sheet"><svg width="12" height="12"><path d="M1.500 2v8M10 2L4 6l6 4" fill="none" stroke="#d0cecc"/></svg></button>
        <button aria-label="Previous sheet"><svg width="12" height="12"><path d="M2 4h3v4H2zM7 4h4v4H7z" fill="none" stroke="#dbd9d7"/></svg></button>
        <button aria-label="Next sheet"><svg width="12" height="12"><path d="M1 4h4v4H1zM7 4h3v4H7z" fill="none" stroke="#dbd9d7"/></svg></button>
        <button aria-label="Last sheet"><svg width="14" height="12"><path d="M12.500 2v8M4 2l6 4-6 4" fill="none" stroke="#d0cecc"/></svg></button>
      </div>
      <button class="tab adder" aria-label="Add sheet"><svg width="5" height="6"><circle cx="2.500" cy="3" r="1.500" fill="none" stroke="#2c7fc6"/></svg></button>
      <button class="tab t-on fw-bold">Übersicht</button><button class="tab t-navy">Pausenplan</button><button class="tab t-rust">Parameter</button><button class="tab t-grey">Hinweise</button>
    </div>
  </main>
  <aside class="side position-relative d-flex flex-column flex-shrink-0" aria-label="Sidebar">
    <button class="d-flex justify-content-center align-items-center" aria-label="Sidebar settings"><svg><use href="#burger"/></svg></button>
    <button class="d-flex justify-content-center align-items-center" aria-label="Properties"><svg><use href="#deck"/></svg></button>
    <button class="d-flex justify-content-center align-items-center" aria-label="Styles"><svg><use href="#styles"/></svg></button>
    <button class="d-flex justify-content-center align-items-center" aria-label="Gallery"><svg><use href="#gallery"/></svg></button>
    <button class="d-flex justify-content-center align-items-center" aria-label="Navigator"><svg><use href="#nav"/></svg></button>
    <button class="d-flex justify-content-center align-items-center" aria-label="Functions"><svg><use href="#fx"/></svg></button>
    <span class="grip position-absolute"></span>
  </aside>
</div>

<footer class="status d-flex align-items-center flex-shrink-0">
  <svg class="ms-1 me-2" width="11" height="10"><path d="M1.500 1.500h8v7h-8zM3.500 1.500v2h4v-2M3.500 8.500v-3h4v3" fill="none" stroke="#aaa"/></svg>
  <span class="s-a">Sheet 1 of 4</span>
  <span class="s-b">Selected: 1 row, 14 columns</span>
  <span class="s-c">PageStyle_Übersicht</span>
  <span class="s-d">English (USA)</span>
  <span class="s-e"><svg width="16" height="10"><path d="M.5 2.500h10v5H.5z" fill="#fff" stroke="#4a9ad6"/><path d="M13 .5h3M13 9.500h3M14.500 .5v9" stroke="#444"/></svg></span>
  <span>Average: ; Sum: 0</span>
  <span class="d-flex align-items-center ms-auto zoomset">
    <button aria-label="Zoom out"><svg width="6" height="6"><path d="M0 3h6" stroke="#333" stroke-width="1.500"/></svg></button>
    <input class="zoomer" type="range" aria-label="Zoom">
    <button aria-label="Zoom in"><svg width="6" height="6"><path d="M0 3h6M3 0v6" stroke="#333" stroke-width="1.500"/></svg></button>
    <span>100%</span>
  </span>
</footer>
</body>
</html>
